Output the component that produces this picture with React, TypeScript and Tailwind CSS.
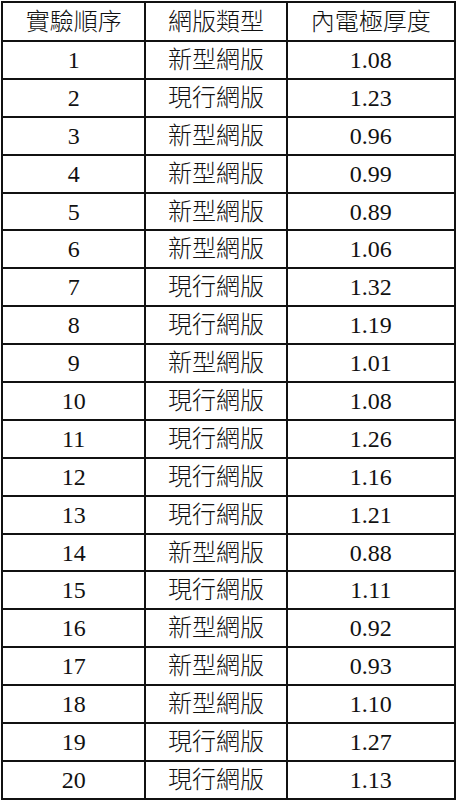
import React from "react";

const rows: [string, string, string][] = [
  ["1", "新型網版", "1.08"],
  ["2", "現行網版", "1.23"],
  ["3", "新型網版", "0.96"],
  ["4", "新型網版", "0.99"],
  ["5", "新型網版", "0.89"],
  ["6", "新型網版", "1.06"],
  ["7", "現行網版", "1.32"],
  ["8", "現行網版", "1.19"],
  ["9", "新型網版", "1.01"],
  ["10", "現行網版", "1.08"],
  ["11", "現行網版", "1.26"],
  ["12", "現行網版", "1.16"],
  ["13", "現行網版", "1.21"],
  ["14", "新型網版", "0.88"],
  ["15", "現行網版", "1.11"],
  ["16", "新型網版", "0.92"],
  ["17", "新型網版", "0.93"],
  ["18", "新型網版", "1.10"],
  ["19", "現行網版", "1.27"],
  ["20", "現行網版", "1.13"],
];

export default function App() {
  return (
    <div className="w-[457px] h-[800px] bg-white">
      <table
        className="border-collapse w-[455px] ml-[1px] mt-[1px] text-[#111] text-[24px] leading-none font-light"
        style={{ fontFamily: '"Liberation Serif", "Noto Sans CJK TC", serif' }}
      >
        <colgroup>
          <col className="w-[144px]" />
          <col className="w-[142px]" />
          <col className="w-[169px]" />
        </colgroup>
        <thead>
          <tr className="h-[39px]">
            <th className="border-2 border-[#111] font-light text-center">實驗順序</th>
            <th className="border-2 border-[#111] font-light text-center">網版類型</th>
            <th className="border-2 border-[#111] font-light text-center">內電極厚度</th>
          </tr>
        </thead>
        <tbody>
          {rows.map((r) => (
            <tr key={r[0]} className="h-[37.9px]">
              <td className="border-2 border-[#111] text-center">{r[0]}</td>
              <td className="border-2 border-[#111] text-center">{r[1]}</td>
              <td className="border-2 border-[#111] text-center">{r[2]}</td>
            </tr>
          ))}
        </tbody>
      </table>
    </div>
  );
}
